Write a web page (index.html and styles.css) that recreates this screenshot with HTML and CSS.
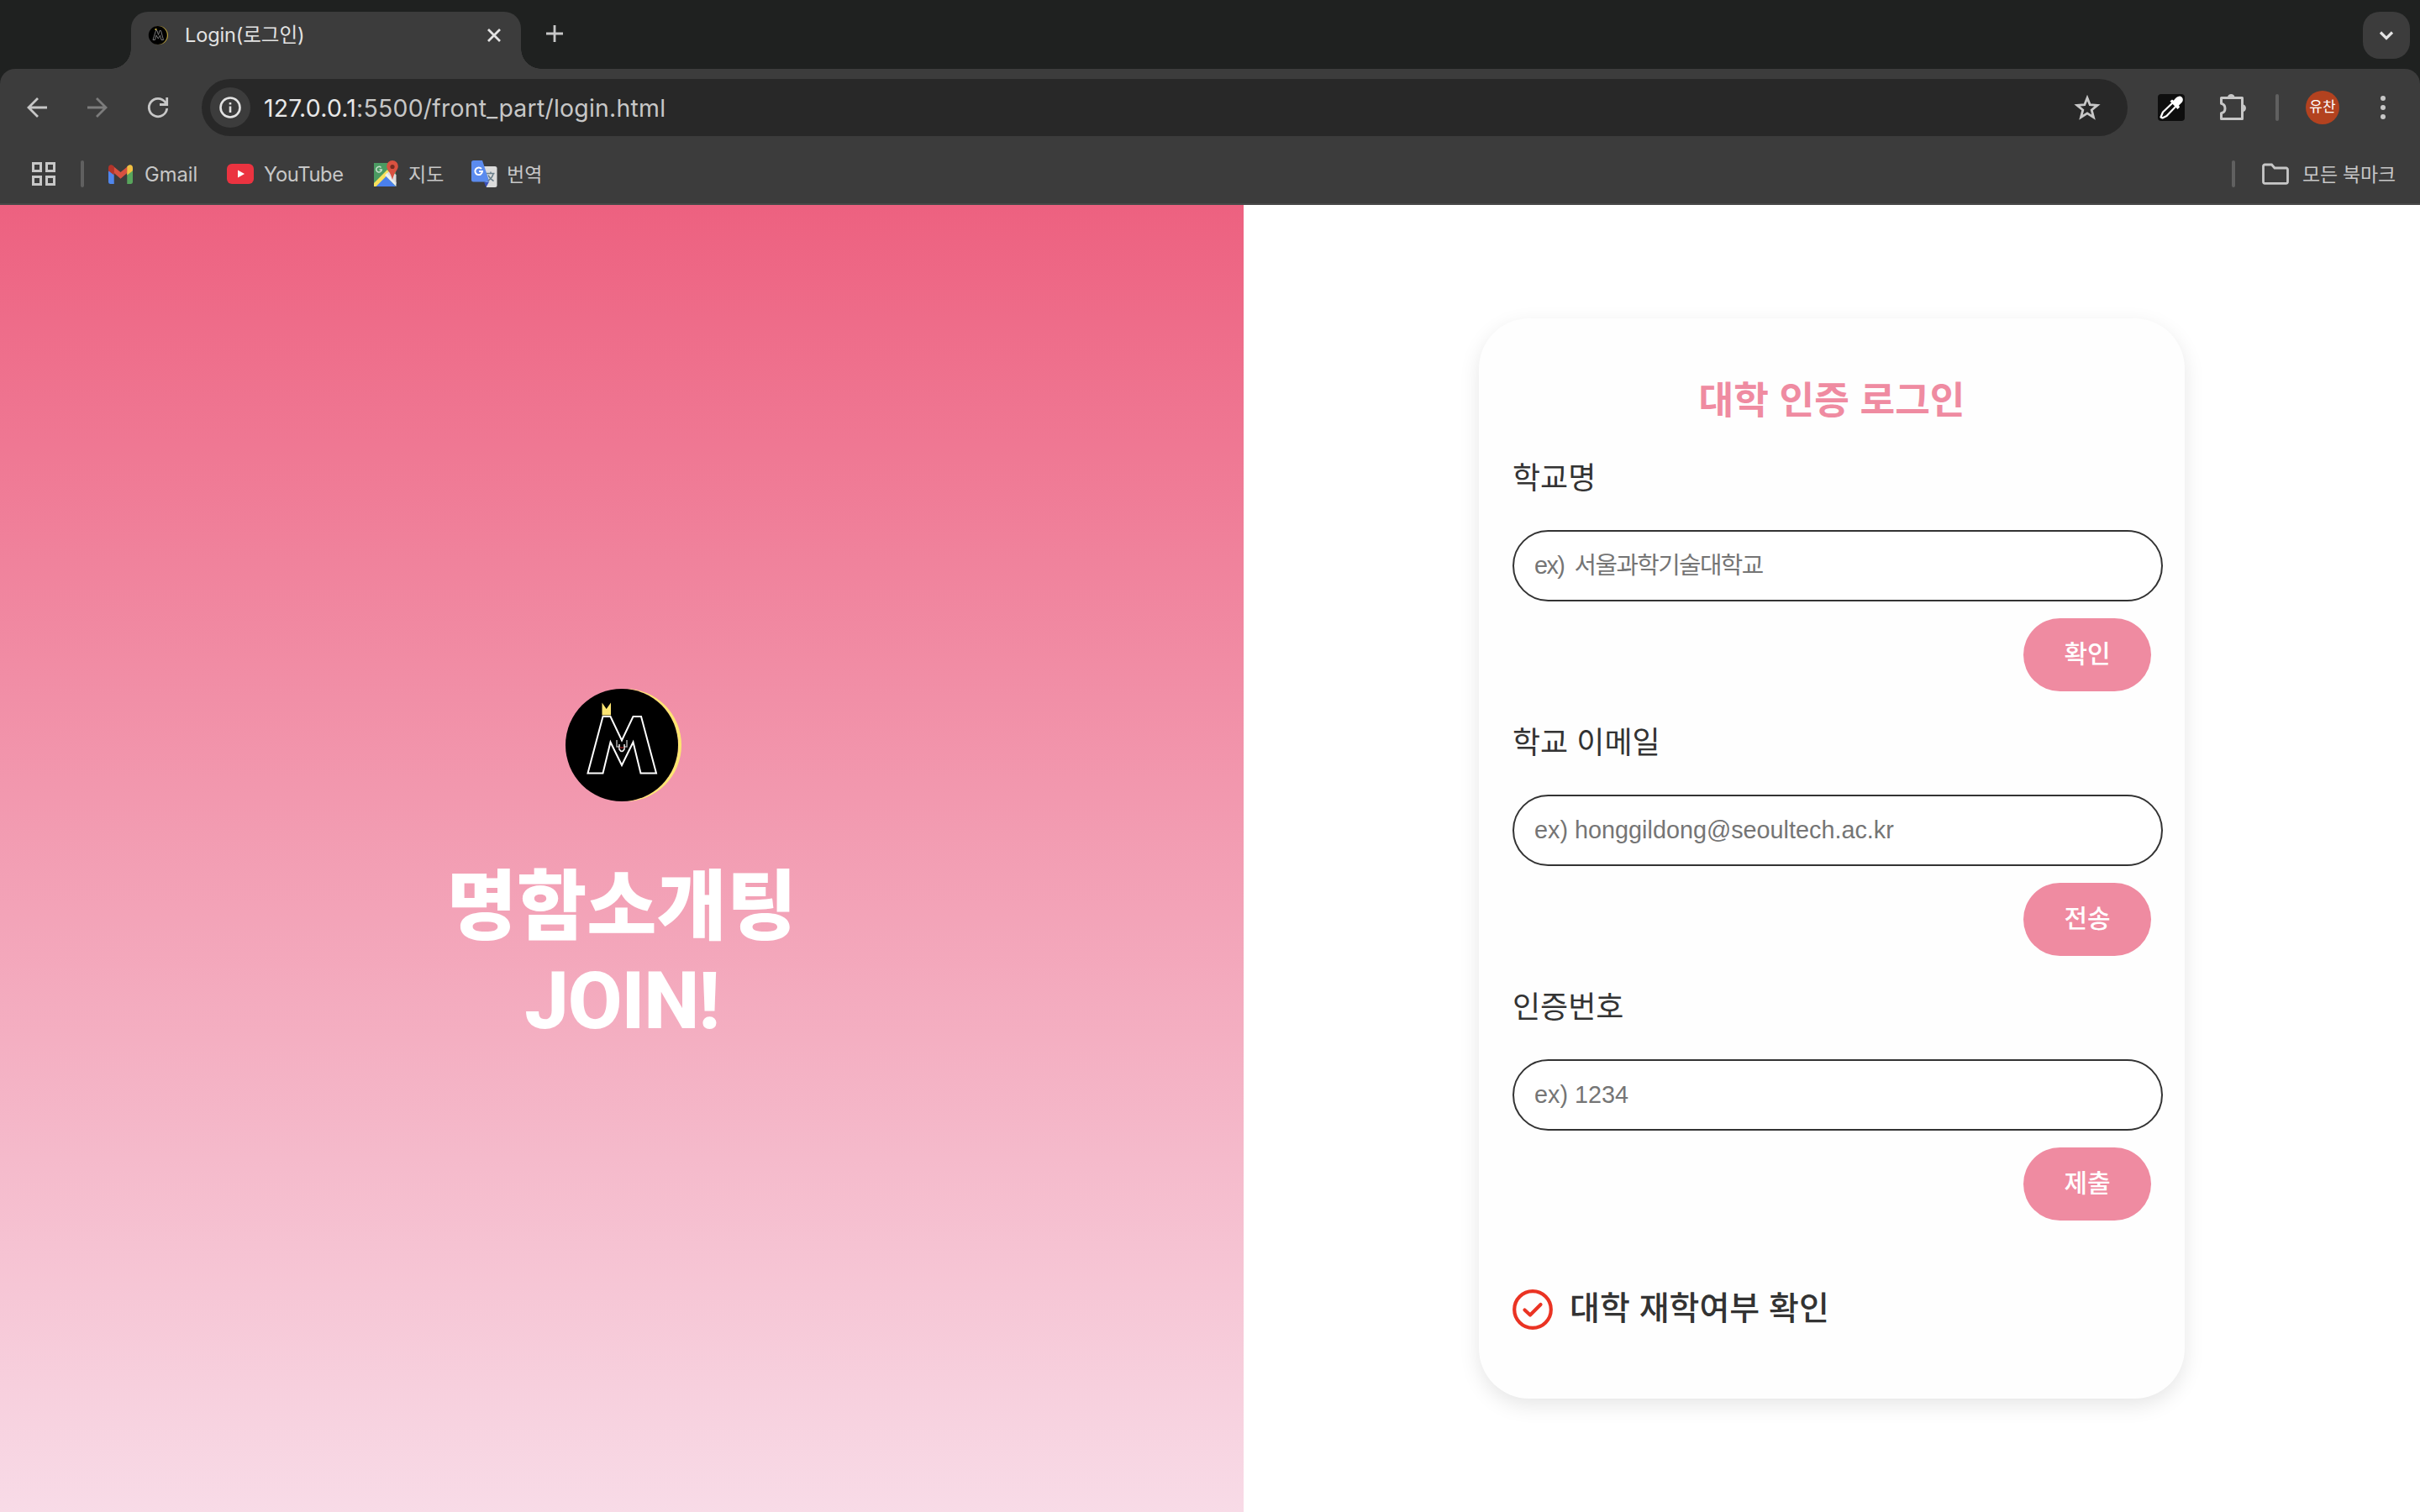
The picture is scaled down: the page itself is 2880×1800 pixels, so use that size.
FILE: index.html
```html
<!DOCTYPE html>
<html lang="ko">
<head>
<meta charset="utf-8">
<title>Login(로그인)</title>
<link rel="stylesheet" href="styles.css">
</head>
<body>
<div class="window">
  <header class="chrome">
    <div class="tabstrip">
      <div class="tab">
        <svg class="favicon" viewBox="0 0 28 28"><circle cx="15" cy="14" r="11" fill="#b79f3c"/><circle cx="13.8" cy="14" r="11" fill="#000"/><path d="M8 19.500 11.500 8.500h1.500l1.500 5 1.500-5h1.500L20.500 19.500h-2.500L16.500 14 14.300 18l-2.300-4L10.500 19.500z" fill="none" stroke="#777" stroke-width="1"/><path d="M10.500 7h2" stroke="#c9b04a" stroke-width="2"/></svg>
        <span class="tab-title">Login(로그인)</span>
        <svg class="tab-close" viewBox="0 0 16 16"><path d="M1 1 15 15M15 1 1 15"/></svg>
      </div>
      <svg class="new-tab" viewBox="0 0 20 20"><path d="M10 0V20M0 10H20"/></svg>
      <div class="tab-search"><svg viewBox="0 0 16 10"><path d="M1 1.500 8 8.500 15 1.500"/></svg></div>
    </div>
    <div class="toolbar">
      <svg class="nav" viewBox="0 0 24 24"><path d="M24 12H2M13 1 2 12 13 23"/></svg>
      <svg class="nav nav-off" viewBox="0 0 24 24"><path d="M0 12H22M11 1 22 12 11 23"/></svg>
      <svg class="nav" viewBox="0 0 24 24"><path d="M22.700 13A10.700 10.700 0 1 1 20.500 5.500L22 8M22.700 0V8.500H14"/></svg>
      <div class="omnibox">
        <span class="site-info"><svg viewBox="0 0 26 26"><circle cx="13" cy="13" r="11.500"/><path d="M13 11.500V19M13 7V9.500"/></svg></span>
        <span class="url"><b>127.0.0.1</b>:5500/front_part/login.html</span>
        <svg class="star" viewBox="0 0 32 30"><path d="M16 3.500 19.200 11.700 28 12.300 21.200 17.900 23.500 26.600 16 21.800 8.500 26.600 10.800 17.900 4 12.300 12.800 11.700z"/></svg>
      </div>
      <svg class="picker" viewBox="0 0 32 32"><rect width="32" height="32" rx="4" fill="#0e0e0e"/><path d="M17.500 10.500 6 21.500 3.500 27.500 5.500 28.500 10.500 26 21.500 14.500" fill="none" stroke="#fff" stroke-width="2.200" stroke-linejoin="round"/><path d="M14.500 8.500 17 6.500 18.800 7.800C21 4.500 24 2 27 2.700 30.500 4 30.500 8 28.500 10L25 13.500 26 15.500 23.500 18z" fill="#fff"/></svg>
      <svg class="puzzle" viewBox="0 0 34 34"><path d="M3.500 5.500H28.500V30.500H3.500V23.800C9.500 22.500 9.500 13.500 3.500 12.200Z"/><path class="fill" d="M11 5C11-.3 19.500-.3 19.500 5zM29 13.500C34.300 13.500 34.300 22 29 22z"/></svg>
      <i class="bar"></i>
      <span class="avatar">유찬</span>
      <svg class="dots" viewBox="0 0 6 28"><circle cx="3" cy="3" r="3"/><circle cx="3" cy="14" r="3"/><circle cx="3" cy="25" r="3"/></svg>
    </div>
    <div class="bookmarks">
      <svg class="grid" viewBox="0 0 28 28"><path d="M1.500 1.500h9v9h-9zM17.500 1.500h9v9h-9zM1.500 17.500h9v9h-9zM17.500 17.500h9v9h-9z"/></svg>
      <i class="bar"></i>
      <div class="bm bm-gmail"><svg viewBox="0 0 28 22"><path d="M0 7V20a2 2 0 0 0 2 2h4.500V9z" fill="#5086ec"/><path d="M28 7V20a2 2 0 0 1-2 2h-4.500V9z" fill="#58a55c"/><path d="M6 9 14 16 22 9V2L14 8.500 6 2z" fill="#d85140"/><path d="M0 3.500C0 0 3.500-1 6.500 2V12L0 7z" fill="#b3342a"/><path d="M28 3.500C28 0 24.500-1 21.500 2V12L28 7z" fill="#f1bf42"/></svg><span>Gmail</span></div>
      <div class="bm bm-yt"><svg viewBox="0 0 32 24"><rect width="32" height="24" rx="6" fill="#eb3340"/><path d="M13 7.500 21 12 13 16.500z" fill="#fff"/></svg><span>YouTube</span></div>
      <div class="bm bm-map"><svg viewBox="0 0 30 32"><rect x="1" y="3" width="26" height="28" fill="#4b9b62"/><path d="M1 31 14 17 27 31z" fill="#4a80ec"/><path d="M1 31V27L17 11 19.500 15 3.500 31z" fill="#f9e15c"/><path d="M14 17.500 17 14.500 27.500 26V31z" fill="#eee"/><path d="M20 12 27.500 17V28L17 15z" fill="#ddd"/><path d="M23 0A6.800 6.800 0 0 1 29.800 7C29.800 11 25 14 23 23 21 14 16.200 11 16.200 7A6.800 6.800 0 0 1 23 0z" fill="#d95140"/><circle cx="23" cy="7.500" r="2.600" fill="#762c22"/><path d="M9.500 8.500A3.300 3.300 0 1 0 10.300 11H7.500" fill="none" stroke="#c8e0cd" stroke-width="1.500"/></svg><span class="ko">지도</span></div>
      <div class="bm bm-tr"><svg viewBox="0 0 32 32"><path d="M13 7H28a2.500 2.500 0 0 1 2.500 2.500V29.500A2.500 2.500 0 0 1 28 32H18z" fill="#dcdcdc"/><path d="M15 25.500H21L17.500 32z" fill="#3a50b8"/><path d="M2.500 0H13L21.500 25.500H2.500A2.500 2.500 0 0 1 0 23V2.500A2.500 2.500 0 0 1 2.500 0z" fill="#5b8bee"/><path d="M12 10A4.300 4.300 0 1 0 13 13H9" fill="none" stroke="#fff" stroke-width="2"/><path d="M18 15.500H27.500M23 13.500V15.500M26 16C25 20 22.500 22.500 19.500 24.500M20 17.500C21.500 21 24 23 26.500 24.500" fill="none" stroke="#6b7f8c" stroke-width="1.500"/></svg><span class="ko">번역</span></div>
      <i class="bar bar-right"></i>
      <svg class="folder" viewBox="0 0 32 26"><path d="M3.500 2H11.500L15 6H28.500A1.800 1.800 0 0 1 30.500 7.800V22.200A1.800 1.800 0 0 1 28.500 24.300H3.500A1.800 1.800 0 0 1 1.500 22.200V3.800A1.800 1.800 0 0 1 3.500 2z"/></svg>
      <span class="all ko">모든 북마크</span>
    </div>
  </header>
  <main class="page">
    <section class="hero">
      <svg class="logo" viewBox="0 0 134 134"><circle cx="67" cy="67" r="67" fill="#000"/><path d="M44.500 33H53.500L67 61.500 80.500 33H90L108 100.500H89.500L80.500 63.500 67 91 53.500 63.500 44.500 100.500H26.500z" fill="none" stroke="#fff" stroke-width="2"/><path d="M43.500 31.500V16.500L48.700 24 54 16.500V31.500z" fill="#fde572"/><path d="M61 61V69H64.500M73 61V69H69.500" fill="none" stroke="#aaa" stroke-width="1.500"/><path d="M64 66V72Q67 77 70 72V66" fill="none" stroke="#eee" stroke-width="1.500"/><path d="M64.500 70H69.500" stroke="#8b1d1d" stroke-width="1.500"/></svg>
      <h1 class="slogan"><span>명함소개팅</span><span class="join">JOIN!</span></h1>
    </section>
    <section class="side">
      <form class="card">
        <h2 class="card-title">대학 인증 로그인</h2>
        <div class="field"><label class="label">학교명</label><input class="input input-ko" type="text" placeholder="ex) 서울과학기술대학교"><button class="btn" type="button">확인</button></div>
        <div class="field"><label class="label">학교 이메일</label><input class="input" type="text" placeholder="ex) honggildong@seoultech.ac.kr"><button class="btn" type="button">전송</button></div>
        <div class="field"><label class="label">인증번호</label><input class="input" type="text" placeholder="ex) 1234"><button class="btn" type="button">제출</button></div>
        <div class="verify"><svg viewBox="0 0 48 48"><circle cx="24" cy="24" r="21.800"/><path d="M14.500 24.500 21 30.500 33.500 18"/></svg><span>대학 재학여부 확인</span></div>
      </form>
    </section>
  </main>
</div>
</body>
</html>
```
FILE: styles.css
```css
* { box-sizing: border-box; }
body { margin: 0; font-family: "Noto Sans CJK KR", sans-serif; }
svg { display: block; flex: none; overflow: visible; }
.window { width: 2880px; height: 1800px; overflow: hidden; display: flex; flex-direction: column; background: #fff; }

.chrome { height: 244px; flex: none; background: #1f2120; color: #c7c7c7; font-family: Inter, "Noto Sans CJK KR", sans-serif; }
.tabstrip { height: 82px; display: flex; align-items: flex-start; padding: 14px 12px 0 156px; }
.tab { position: relative; width: 464px; height: 68px; display: flex; align-items: center; padding: 0 24px 12px 18px; background: #3c3c3c; border-radius: 20px 20px 0 0; }
.tab::before, .tab::after { content: ""; position: absolute; bottom: 0; width: 24px; height: 24px; }
.tab::before { left: -24px; background: radial-gradient(circle at 0 0, transparent 23.5px, #3c3c3c 24px); }
.tab::after { right: -24px; background: radial-gradient(circle at 100% 0, transparent 23.5px, #3c3c3c 24px); }
.favicon { width: 28px; height: 28px; }
.tab-title { margin-left: 18px; padding-bottom: 4px; font-size: 23.5px; color: #e3e3e3; flex: 1; white-space: nowrap; letter-spacing: -0.1px; }
.tab-close { width: 16px; height: 16px; fill: none; stroke: #e3e3e3; stroke-width: 2.8; }
.new-tab { width: 20px; height: 20px; margin: 16px 0 0 30px; fill: none; stroke: #c7c7c7; stroke-width: 2.8; }
.tab-search { margin-left: auto; width: 56px; height: 56px; border-radius: 20px; background: #3c3c3c; display: flex; align-items: center; justify-content: center; }
.tab-search svg { width: 16px; height: 10px; fill: none; stroke: #e3e3e3; stroke-width: 3.2; }

.toolbar { height: 92px; background: #3c3c3c; border-radius: 18px 18px 0 0; display: flex; align-items: center; padding: 0 41px 0 32px; }
.nav { width: 24px; height: 24px; margin-right: 48px; fill: none; stroke: #c7c7c7; stroke-width: 2.8; }
.nav-off { stroke: #7c7c7c; }
.omnibox { width: 2292px; flex: none; height: 68px; margin-left: -8px; border-radius: 34px; background: #282828; display: flex; align-items: center; padding: 0 32px 0 10px; }
.site-info { width: 48px; height: 48px; border-radius: 50%; background: #3c3c3c; display: flex; align-items: center; justify-content: center; }
.site-info svg { width: 26px; height: 26px; fill: none; stroke: #e3e3e3; stroke-width: 2.6; }
.url { margin-left: 16px; flex: 1; font-size: 28.4px; letter-spacing: 0.24px; color: #c7c7c7; white-space: nowrap; }
.url b { font-weight: 400; color: #e8e8e8; }
.star { width: 32px; height: 30px; fill: none; stroke: #c7c7c7; stroke-width: 2.8; }
.picker { width: 32px; height: 32px; margin-left: 36px; }
.puzzle { width: 34px; height: 34px; margin-left: 40px; fill: none; stroke: #c7c7c7; stroke-width: 3; stroke-linejoin: round; }
.puzzle .fill { fill: #c7c7c7; stroke: none; }
.bar { width: 4px; height: 32px; border-radius: 2px; background: #606060; flex: none; }
.toolbar .bar { margin-left: 34px; }
.avatar { width: 40px; height: 40px; flex: none; margin-left: 32px; border-radius: 50%; background: #b3421f; color: #fff; font-size: 17px; line-height: 38px; text-align: center; white-space: nowrap; }
.dots { width: 6px; height: 28px; margin-left: 49px; fill: #c7c7c7; }

.bookmarks { height: 70px; background: #3c3c3c; border-bottom: 2px solid #484848; display: flex; align-items: center; padding: 0 29px 2px 38px; font-size: 23.7px; white-space: nowrap; }
.grid { width: 28px; height: 28px; fill: none; stroke: #c7c7c7; stroke-width: 3; }
.bookmarks .bar { margin-left: 30px; }
.ko { font-size: 23px; padding-bottom: 3px; }
.bm { display: flex; align-items: center; }
.bm-gmail { width: 141px; margin-left: 29px; }
.bm-gmail svg { width: 29px; height: 23px; margin-right: 14px; }
.bm-yt { width: 174px; letter-spacing: -0.35px; }
.bm-yt svg { width: 32px; height: 24px; margin-right: 12px; }
.bm-map { width: 117px; }
.bm-map svg { width: 30px; height: 32px; margin-right: 12px; }
.bm-tr svg { width: 32px; height: 32px; margin-right: 10px; }
.bookmarks .bar-right { margin-left: auto; }
.folder { width: 32px; height: 26px; margin-left: 32px; fill: none; stroke: #c7c7c7; stroke-width: 2.8; }
.all { margin-left: 16px; letter-spacing: -0.2px; }

.page { flex: 1; display: flex; }
.hero { width: 1480px; background: linear-gradient(#ed6180, #f8dbe7); display: flex; flex-direction: column; align-items: center; padding-top: 576px; }
.logo { width: 134px; height: 134px; border-radius: 50%; box-shadow: 4px 0 0 #fde572; }
.slogan { margin: 60px 0 0; font-size: 90.5px; font-weight: 900; line-height: 116px; color: #fff; text-align: center; display: flex; flex-direction: column; align-items: center; }
.join { margin-top: 4px; font-family: Roboto, sans-serif; font-size: 94px; font-weight: 800; letter-spacing: -1.2px; }
.side { flex: 1; padding: 135px 0 0 280px; background: #fff; }
.card { width: 840px; height: 1286px; padding: 62px 26px 0 40px; border-radius: 60px; background: #fefefe; box-shadow: 0 8px 24px rgba(0, 0, 0, 0.1); display: flex; flex-direction: column; }
.card-title { margin: 0 14px 0 0; font-size: 45.3px; line-height: 64px; font-weight: 700; color: #ef8ba1; text-align: center; }
.field { height: 315px; flex: none; padding-top: 35px; display: flex; flex-direction: column; }
.label { flex: none; font-size: 36px; line-height: 52px; font-weight: 400; color: #333; }
.input { flex: none; width: 774px; height: 85px; margin-top: 39px; padding: 0 24px; border: 2px solid #333; border-radius: 43px; background: #fff; font-family: "Liberation Sans", "Noto Sans CJK KR", sans-serif; font-size: 28.8px; }
.input::placeholder { color: #757575; opacity: 1; }
.input-ko::placeholder { letter-spacing: -1.6px; word-spacing: 6px; }
.btn { flex: none; align-self: flex-end; width: 152px; height: 87px; margin: 20px 14px 0 0; padding: 0 0 8px; border: 0; border-radius: 44px; background: #ef8ba1; color: #fff; font-family: inherit; font-size: 30px; font-weight: 500; }
.verify { display: flex; align-items: center; gap: 20px; margin-top: 76px; font-size: 39px; font-weight: 500; line-height: 56px; color: #333; }
.verify svg { width: 48px; height: 48px; fill: none; stroke: #ea3323; stroke-width: 4.200; stroke-linecap: round; stroke-linejoin: round; }
.verify span { padding-bottom: 10px; }
```
